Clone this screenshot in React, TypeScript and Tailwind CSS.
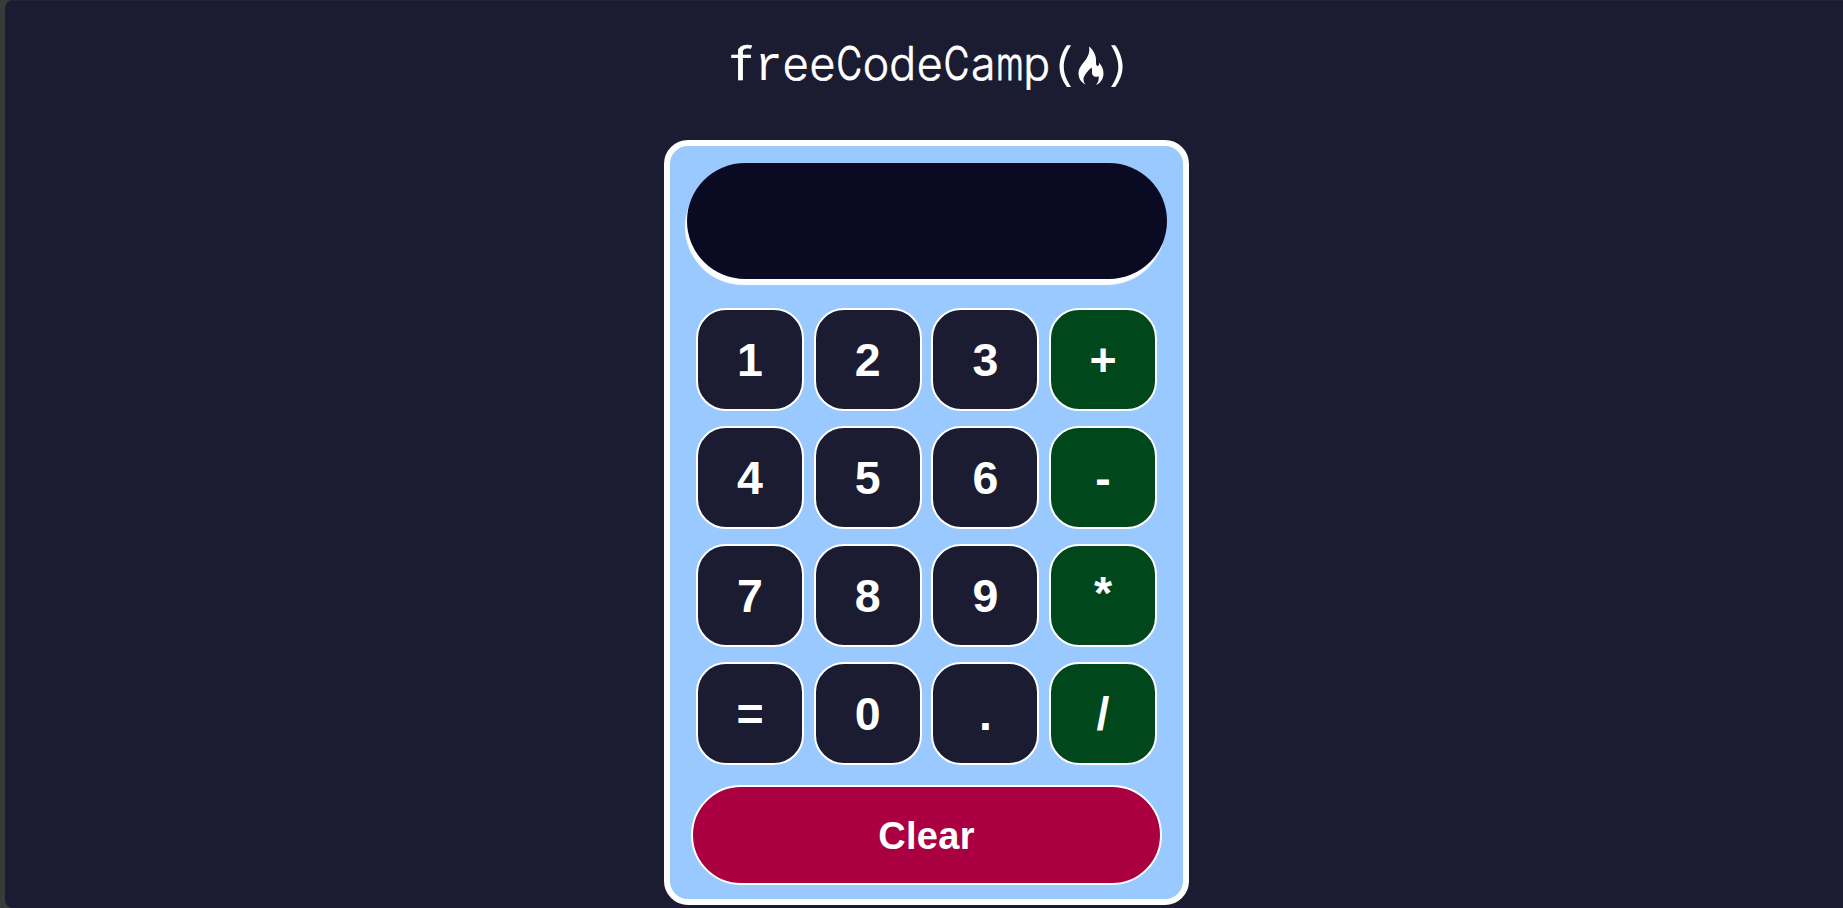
type Key = { label: string; green?: boolean };

const keys: Key[] = [
  { label: "1" }, { label: "2" }, { label: "3" }, { label: "+", green: true },
  { label: "4" }, { label: "5" }, { label: "6" }, { label: "-", green: true },
  { label: "7" }, { label: "8" }, { label: "9" }, { label: "*", green: true },
  { label: "=" }, { label: "0" }, { label: "." }, { label: "/", green: true },
];

// Every letter of the wordmark is centred in a cell of the same width.
const FIRST_CELL = 741.5;
const CELL = 26.8;

const letterScale: Record<string, number> = { m: 0.68, C: 0.76, f: 1.35 };
const letterStroke: Record<string, number> = { m: 1.1, C: 1.2, f: 0.6 };

function Logo() {
  return (
    <svg className="mt-[25px] h-[80px] w-[410px] shrink-0 overflow-visible" viewBox="721.5 26 410 80" fill="white">
      <g
        fontSize="46"
        fontWeight="300"
        textAnchor="middle"
        stroke="white"
        strokeLinejoin="round"
        style={{ fontFamily: 'Inter, "Liberation Sans", sans-serif' }}
      >
        {"freeCodeCamp".split("").map((letter, i) => {
          const x = FIRST_CELL + CELL * i;
          if (letter === "r") {
            return (
              <text
                key={i}
                x="0"
                y="0"
                strokeWidth="0"
                transform={`translate(${x} 79.5) scale(1 1.04)`}
                style={{ fontFamily: '"Liberation Mono", monospace' }}
              >
                r
              </text>
            );
          }
          return (
            <text
              key={i}
              x="0"
              y="0"
              strokeWidth={letterStroke[letter] ?? 0.6}
              transform={`translate(${x} 79.5) scale(${letterScale[letter] ?? 0.97} 1)`}
            >
              {letter}
            </text>
          );
        })}
        <text x="0" y="0" strokeWidth="0" transform="translate(1063 80.5) scale(1.35 1)">(</text>
        <text x="0" y="0" strokeWidth="0" transform="translate(1118 80.5) scale(1.35 1)">)</text>
      </g>
      <path d="M1088.5 46.5C1092 49 1096 55 1095.5 61C1095.3 64 1096 66 1097 66C1098.5 66 1099 64 1098.3 62.5C1101 65 1103 69 1103 73.5C1103 79 1100 83 1095.5 85C1097.5 82.5 1099 79 1098 76C1096.5 77.5 1093 77 1091.8 74.5C1091 72 1092 69 1091 67.5C1087 71 1083 76 1083 79C1083 82 1084 83.5 1085.5 84.8C1080 82 1078 78 1078 73C1078 68 1082 64 1085 60C1088 56 1089.5 51 1088.5 46.5Z" />
    </svg>
  );
}

export default function App() {
  return (
    <div className="h-[908px] w-full overflow-hidden bg-[#3a3a3a] pl-[5px]">
      <main className="flex h-full flex-col items-center rounded-l-[8px] border-t border-[#232333] bg-[#1b1b32] pl-[5px] font-['Liberation_Sans',sans-serif] text-white">
        <Logo />
        <section className="mt-[34px] flex h-[765px] w-[525px] shrink-0 flex-col items-center rounded-[24px] border-6 border-white bg-[#99c9ff] pt-[17px]">
          <div className="ml-px h-[116px] w-[480px] shrink-0 rounded-full bg-[#0a0a23] shadow-[-2px_6px_1px_0px_white]" />
          <div className="mt-[29px] grid grid-cols-[repeat(4,108px)] gap-x-[9.7px] gap-y-[15px]">
            {keys.map((key) => (
              <button
                key={key.label}
                className={`h-[103px] rounded-[30px] border-2 border-white text-[46.5px] leading-none font-bold ${key.label === "*" ? "pb-[4px]" : "pt-px"} ${key.green ? "bg-[#00471b]" : "bg-[#1b1b32]"}`}
              >
                {key.label}
              </button>
            ))}
          </div>
          <button className="mt-[20px] h-[100px] w-[471px] shrink-0 rounded-full border-2 border-white bg-[#aa0042] pt-px text-[38px] leading-none font-bold tracking-[0.3px]">
            Clear
          </button>
        </section>
      </main>
    </div>
  );
}
